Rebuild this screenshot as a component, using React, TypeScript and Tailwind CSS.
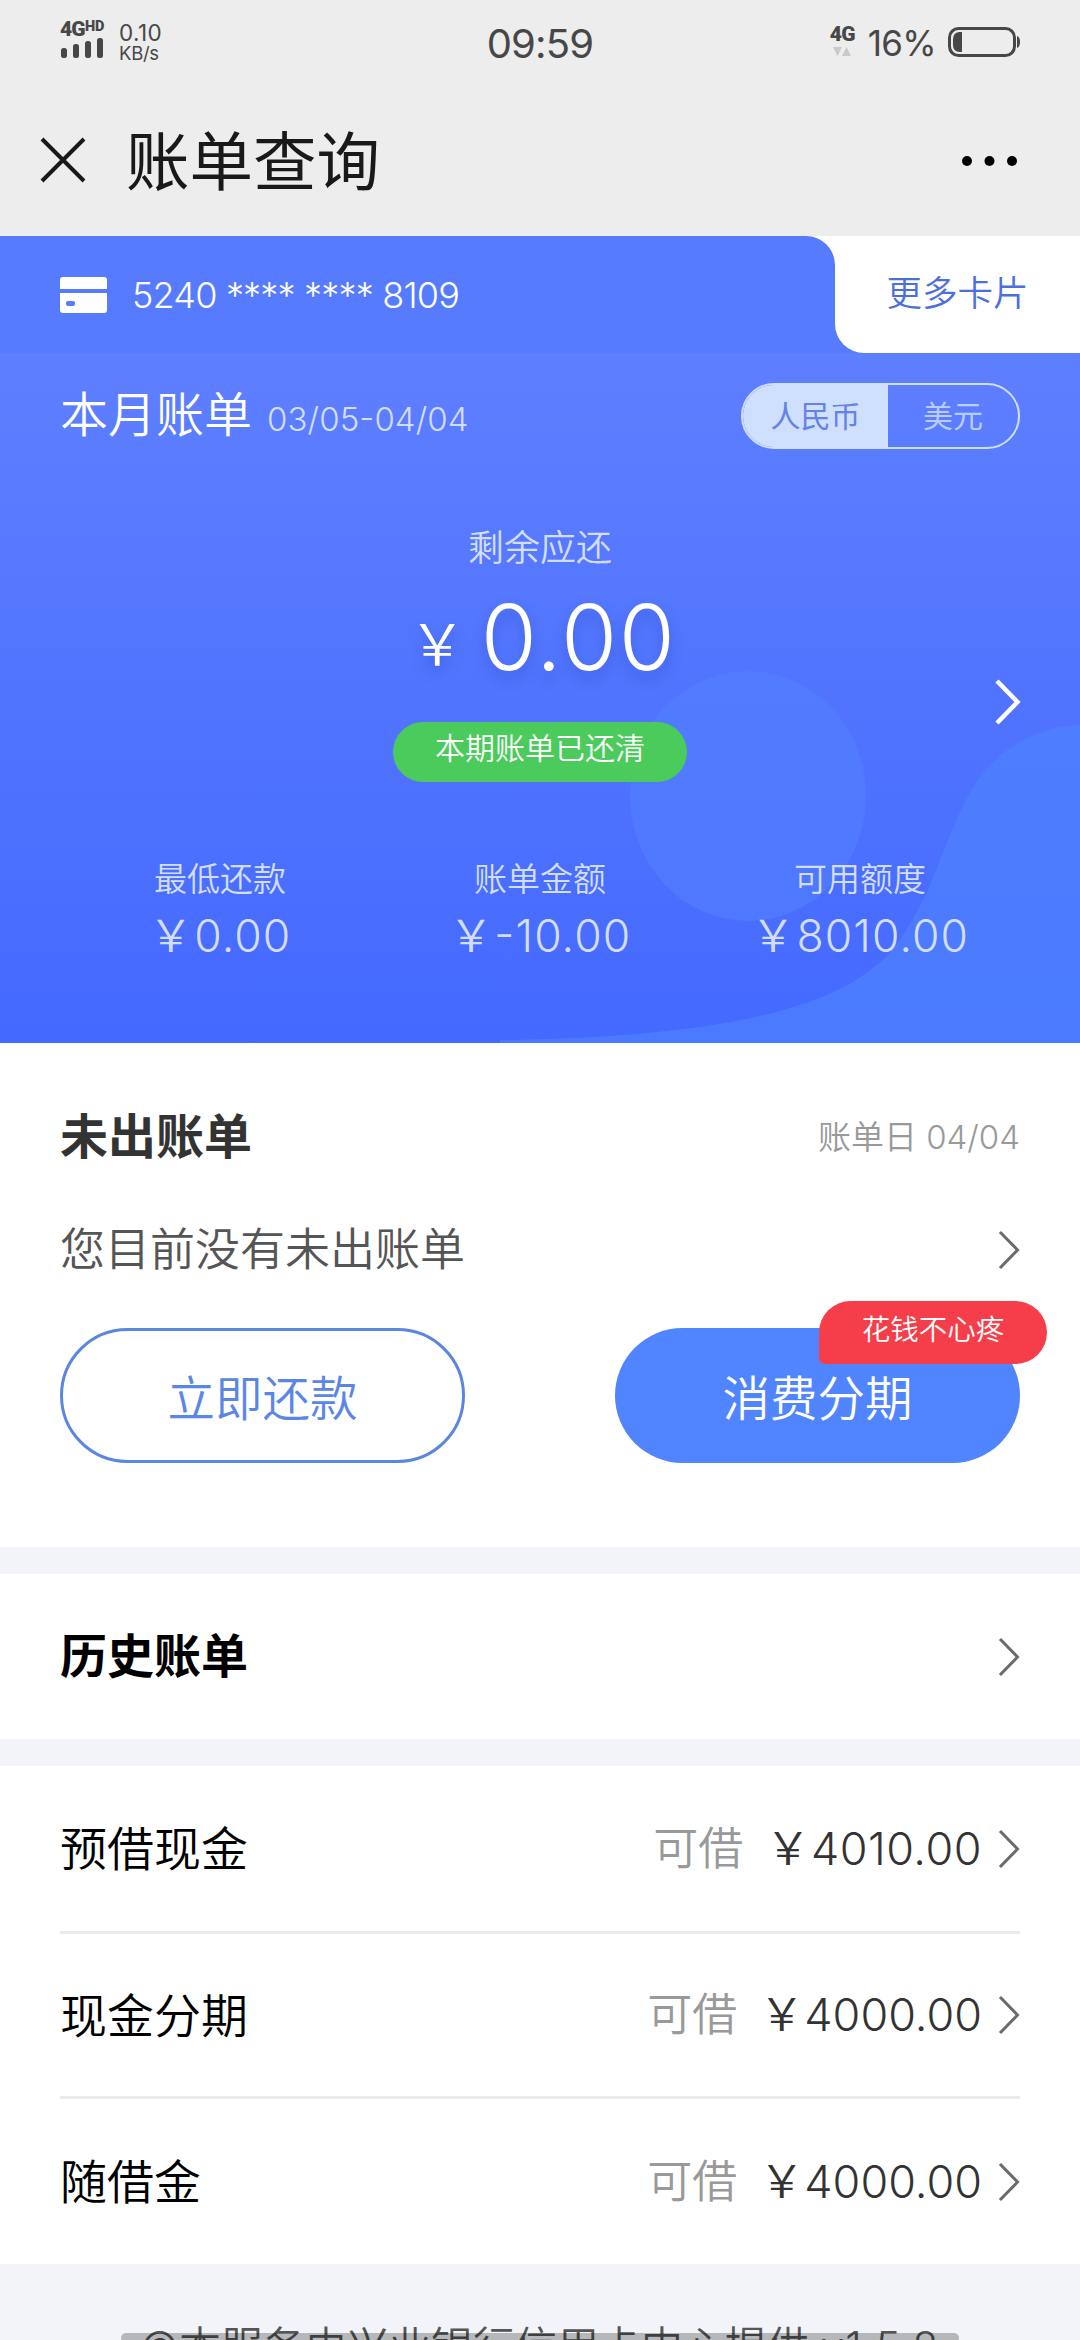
import { ReactNode } from 'react';

type Stat = { label: string; value: string };
type LoanItem = { name: string; amount: string; rowClass: string };

const stats: Stat[] = [
  { label: '最低还款', value: '0.00' },
  { label: '账单金额', value: '-10.00' },
  { label: '可用额度', value: '8010.00' },
];

const loans: LoanItem[] = [
  { name: '预借现金', amount: '4010.00', rowClass: 'h-[168px] border-b-[3px] tracking-[0.5px]' },
  { name: '现金分期', amount: '4000.00', rowClass: 'h-[165px] border-b-[3px]' },
  { name: '随借金', amount: '4000.00', rowClass: 'h-[165px]' },
];

const Chevron = () => (
  <svg className="h-[40px] w-[22px] shrink-0" viewBox="0 0 22 40" fill="none">
    <path d="M2 2 L19.5 20 L2 38" stroke="#6b6b6b" strokeWidth="3" />
  </svg>
);

const SignalBars = () => (
  <svg className="mt-px ml-px h-[20px] w-[43px]" viewBox="0 0 43 20" fill="#474747">
    <rect x="0" y="10" width="6" height="10" rx="2.5" />
    <rect x="12" y="6" width="6" height="14" rx="2.5" />
    <rect x="24" y="3" width="6" height="17" rx="2.5" />
    <rect x="36" y="0" width="6" height="20" rx="2.5" />
  </svg>
);

const StatusBar = () => (
  <div className="grid h-[84px] grid-cols-3 px-[60px] text-[#474747]">
    <div className="flex pt-[22px]">
      <div className="w-[59px] font-['Roboto',sans-serif]">
        <div className="flex h-[15px] items-start">
          <span className="text-[21px] leading-[15px] font-black tracking-[-0.8px]">4G</span>
          <span className="text-[14.5px] leading-[10px] font-black">HD</span>
        </div>
        <SignalBars />
      </div>
      <div className="pt-[1px]">
        <div className="text-[22.5px] leading-[20px] tracking-[0.4px]">0.10</div>
        <div className="text-[18.5px] leading-[20px] tracking-[-0.3px]">KB/s</div>
      </div>
    </div>
    <div className="pt-[22px] text-center text-[40px] leading-[44px] tracking-[-0.8px]">09:59</div>
    <div className="flex items-start justify-end pt-[27px]">
      <div className="mr-[13px] w-[25px]">
        <div className="font-['Roboto',sans-serif] text-[21px] leading-[15px] font-black tracking-[-0.8px]">4G</div>
        <svg className="mt-[5px] ml-[3px] h-[9px] w-[18px]" viewBox="0 0 18 9" fill="#c9c9c9">
          <path d="M0 0H9L4.500 9ZM9 9H18L13.500 0Z" />
        </svg>
      </div>
      <span className="mr-[12px] text-[35px] leading-[32px] tracking-[-0.7px]">16%</span>
      <svg className="h-[30px] w-[72px]" viewBox="0 0 72 30" fill="none">
        <rect x="1.500" y="1.500" width="65" height="27" rx="9" stroke="#474747" strokeWidth="3" />
        <path d="M14 5H11Q5 6 5 12V18Q5 24 11 25H14Z" fill="#474747" />
        <path d="M69 9Q72 10 72 15T69 21Z" fill="#474747" />
      </svg>
    </div>
  </div>
);

const TitleBar = () => (
  <div className="flex h-[152px] items-center pr-[62px] pl-[40px]">
    <svg className="h-[46px] w-[46px]" viewBox="0 0 46 46" fill="none">
      <path d="M2 2L44 44M44 2L2 44" stroke="#191919" strokeWidth="4" />
    </svg>
    <h1 className="mt-[3px] ml-[40px] flex-1 text-[63.5px] leading-none text-[#191919]">账单查询</h1>
    <svg className="mt-[2px] h-[10px] w-[56px]" viewBox="0 0 56 10" fill="#000">
      <circle cx="5" cy="5" r="5" />
      <circle cx="27.500" cy="5" r="5" />
      <circle cx="50" cy="5" r="5" />
    </svg>
  </div>
);

const CardTabs = () => (
  <div className="flex h-[117px] bg-white">
    <div className="flex w-[835px] items-center rounded-tr-[29px] bg-[#567bff] pl-[60px]">
      <svg className="h-[36px] w-[47px]" viewBox="0 0 47 36">
        <path
          d="M3 0H44Q47 0 47 3V12H0V3Q0 0 3 0ZM0 16H47V33Q47 36 44 36H3Q0 36 0 33Z"
          fill="#fff"
        />
        <rect x="6" y="24" width="9" height="5" rx="2" fill="#567bff" />
      </svg>
      <span className="ml-[25px] text-[36px] font-[350] tracking-[-0.8px] text-white">
        5240 **** **** 8109
      </span>
    </div>
    <div className="flex-1 bg-[#567bff]">
      <div className="flex h-full items-center justify-center rounded-bl-[29px] bg-white pb-[2px] text-[35.5px] font-[350] text-[#4a70dc]">
        更多卡片
      </div>
    </div>
  </div>
);

const Backdrop = () => (
  <svg className="absolute inset-0 h-[690px] w-[1080px]" viewBox="0 0 1080 690" fill="none">
    <ellipse cx="748" cy="443" rx="118" ry="125" fill="#5180ff" opacity="0.6" />
    <path
      d="M1080 372C1035 374 992 396 966 447C938 502 934 540 896 592C850 652 735 684 500 687V690H1080Z"
      fill="#4d80ff"
      opacity="0.75"
    />
  </svg>
);

const BillPanel = () => (
  <section className="relative h-[690px] bg-gradient-to-b from-[#5e7fff] to-[#4469ff]">
    <Backdrop />
    <div className="relative flex h-full flex-col">
      <div className="mt-[30px] flex h-[66px] items-center px-[60px]">
        <h2 className="-mt-[2px] text-[48px] leading-none font-[350] text-white">本月账单</h2>
        <span className="mt-[8px] ml-[15px] flex-1 text-[33px] font-light tracking-[0.1px] text-[#d3deff] [font-feature-settings:'case']">
          03/05-04/04
        </span>
        <div className="flex h-[66px] w-[279px] overflow-hidden rounded-full border-[2px] border-[#cfe0ff] text-[30px]">
          <div className="flex w-[145px] items-center justify-center bg-[#cfe0ff] text-[#6482e8]">人民币</div>
          <div className="flex flex-1 items-center justify-center text-[#b9ccff]">美元</div>
        </div>
      </div>
      <div className="mt-[75px] text-center text-[36px] leading-[48px] font-[350] text-[#d3deff]">剩余应还</div>
      <div className="mt-[15px] flex h-[100px] items-baseline justify-center pl-[5px] text-white [text-shadow:0_8px_14px_rgba(40,70,190,0.45)]">
        <span className="-translate-y-[5px] text-[57px] leading-[100px] font-[350]">￥</span>
        <span className="ml-[15px] text-[91px] leading-[100px] font-[350] tracking-[1.5px]">0.00</span>
      </div>
      <div className="mx-auto mt-[35px] flex h-[60px] w-[294px] items-center justify-center rounded-full bg-[#4acb5c] pb-[7px] text-[30px] font-[350] text-white">
        本期账单已还清
      </div>
      <div className="mt-[77px] grid grid-cols-3 px-[60px] text-center font-[350] text-[#d3deff]">
        {stats.map((stat) => (
          <div key={stat.label}>
            <div className="text-[33px] leading-[40px]">{stat.label}</div>
            <div className="mt-[11px] text-[44.5px] leading-[52px] tracking-[1.1px] [font-feature-settings:'case']">
              ￥{stat.value}
            </div>
          </div>
        ))}
      </div>
    </div>
    <svg className="absolute top-[326px] right-[58px] h-[46px] w-[30px]" viewBox="0 0 30 46" fill="none">
      <path d="M5 2L25.500 23L5 44" stroke="#fff" strokeWidth="4.500" />
    </svg>
  </section>
);

const UnbilledSection = () => (
  <section className="h-[504px] bg-white px-[60px] pt-[65px]">
    <div className="flex h-[58px] items-center justify-between">
      <h2 className="text-[48px] leading-none font-bold text-[#333]">未出账单</h2>
      <span className="mt-px text-[33px] font-[350] text-[#999]">账单日 04/04</span>
    </div>
    <div className="mt-[54px] flex h-[60px] items-center justify-between">
      <p className="text-[45px] font-[350] text-[#555]">您目前没有未出账单</p>
      <Chevron />
    </div>
    <div className="mt-[48px] flex justify-between text-[47.5px] font-[350]">
      <button className="h-[135px] w-[405px] rounded-full border-[3px] border-[#5b86e0] pt-[7px] text-[#5a86e6]">
        立即还款
      </button>
      <button className="relative h-[135px] w-[405px] rounded-full bg-[#5085ff] pt-[7px] text-white">
        消费分期
        <span className="absolute top-[-27px] right-[-27px] flex h-[63px] w-[228px] items-center justify-center rounded-[32px] rounded-bl-[6px] bg-[#f63e4a] pb-[5px] text-[28.5px]">
          花钱不心疼
        </span>
      </button>
    </div>
  </section>
);

const Block = ({ children }: { children: ReactNode }) => (
  <section className="mt-[27px] bg-white px-[60px]">{children}</section>
);

export default function App() {
  return (
    <div className="relative h-[2340px] w-[1080px] overflow-hidden bg-[#f3f4f9] font-['Inter','Noto_Sans_CJK_SC',sans-serif]">
      <header className="bg-[#ededed]">
        <StatusBar />
        <TitleBar />
      </header>
      <CardTabs />
      <BillPanel />
      <UnbilledSection />
      <Block>
        <div className="flex h-[165px] items-center justify-between">
          <h2 className="text-[47px] font-bold text-black">历史账单</h2>
          <Chevron />
        </div>
      </Block>
      <Block>
        {loans.map((item) => (
          <div key={item.name} className={`flex items-center border-[#ebebeb] ${item.rowClass}`}>
            <h3 className="flex-1 pt-[2px] text-[47px] font-[350] tracking-normal text-black">{item.name}</h3>
            <span className="text-[45px] font-[350] tracking-normal text-[#999]">可借</span>
            <span className="mr-[16px] ml-[22px] text-[45px] font-[350] text-[#333]">￥{item.amount}</span>
            <Chevron />
          </div>
        ))}
      </Block>
      <footer className="pt-[51px] text-center text-[42px] font-[350] text-[#555]">
        ©本服务由兴业银行信用卡中心提供 <span className="tracking-[1.2px]">v1.5.8</span>
      </footer>
      <div className="absolute bottom-[-3px] left-[121px] h-[10px] w-[838px] rounded-full bg-black/25" />
    </div>
  );
}
